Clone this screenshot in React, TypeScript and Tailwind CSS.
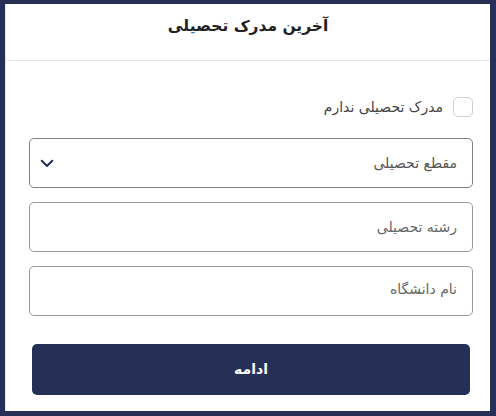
import React from "react";

export default function App() {
  const font = { fontFamily: '"DejaVu Sans", "Noto Sans", sans-serif' };
  return (
    <div className="w-[496px] h-[416px] bg-[#262f55] pt-[4px] pl-[5px] pr-[6px] pb-[5px]" dir="rtl" style={font}>
      <div className="w-full h-full bg-white flex flex-col border-l border-[#e3e3e8]">
        <div className="h-[57px] border-b border-[#e6e6e6] flex items-center justify-center pb-[10px]">
          <h1 className="text-[15.5px] font-bold text-[#222]">آخرین مدرک تحصیلی</h1>
        </div>
        <div className="flex flex-col pr-[17px] pl-[23px] pt-[35px]">
          <label className="flex items-center gap-[10px] h-[22px]">
            <span className="w-[20px] h-[20px] rounded-[5px] border border-[#cfcfd4] bg-white shrink-0" />
            <span className="text-[14px] text-[#444]">مدرک تحصیلی ندارم</span>
          </label>
          <div className="mt-[20px] h-[50px] border border-[#808080] rounded-[5px] flex items-center justify-between pr-[15px] pl-[8px]">
            <span className="text-[14px] text-[#555]">مقطع تحصیلی</span>
            <svg width="18" height="18" viewBox="0 0 24 24" fill="none" stroke="#262f55" strokeWidth="2.8" strokeLinecap="round" strokeLinejoin="round">
              <path d="M5 9l7 7 7-7" />
            </svg>
          </div>
          <div className="mt-[14px] h-[50px] border border-[#9a9a9a] rounded-[5px] flex items-center pr-[15px]">
            <span className="text-[14px] text-[#666]">رشته تحصیلی</span>
          </div>
          <div className="mt-[14px] h-[50px] border border-[#9a9a9a] rounded-[5px] flex items-center pr-[15px] pb-[4px]">
            <span className="text-[14px] text-[#666]">نام دانشگاه</span>
          </div>
          <button className="mt-[28px] mr-[3px] ml-[3px] h-[51px] rounded-[5px] bg-[#263056] text-white text-[14px] font-bold flex items-center justify-center">
            ادامه
          </button>
        </div>
      </div>
    </div>
  );
}
